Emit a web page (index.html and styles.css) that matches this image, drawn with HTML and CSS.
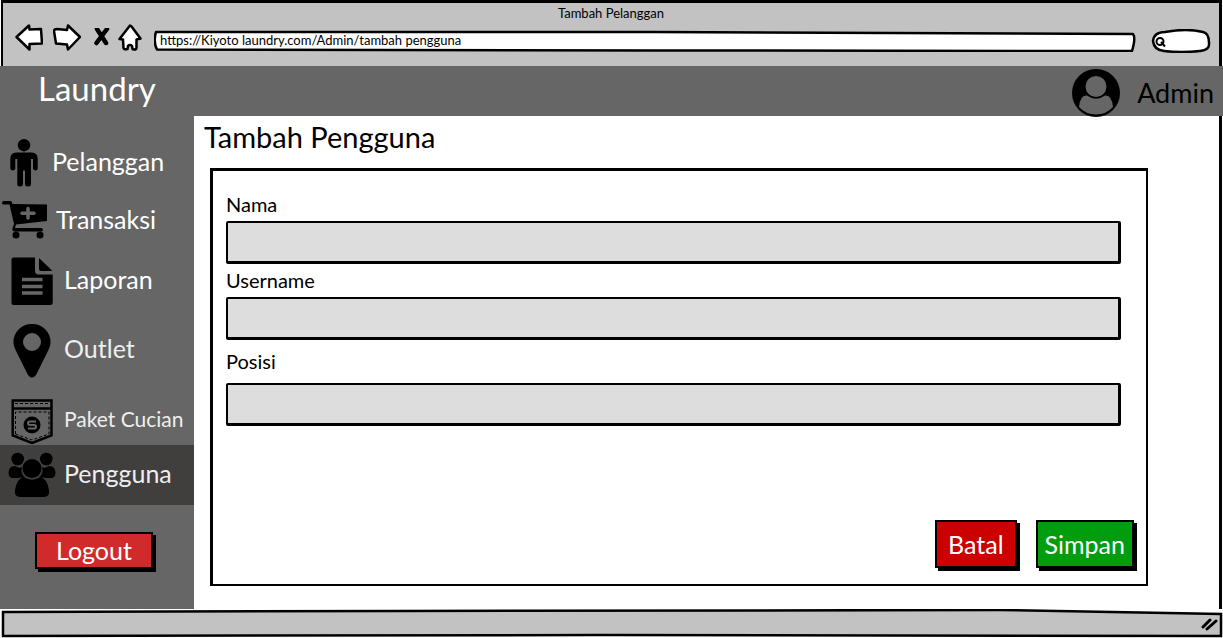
FILE: index.html
```html
<!DOCTYPE html>
<html lang="id">
<head>
<meta charset="utf-8">
<title>Tambah Pelanggan</title>
<link rel="stylesheet" href="styles.css">
</head>
<body>
<div class="window">
  <div class="chrome">
    <div class="chrome-title">Tambah Pelanggan</div>
    <div class="toolbar">
      <button class="tool" type="button" aria-label="Kembali">
        <svg width="28" height="28" viewBox="0 0 28 28"><path class="outline" d="M1.500 13 14 1.500 14.500 5.500 26 5 27 19.500 14.500 20 14.500 25.500Z"/></svg>
      </button>
      <button class="tool tool-forward" type="button" aria-label="Maju">
        <svg width="28" height="28" viewBox="0 0 28 28"><path class="outline" d="M1 7Q1 5 4 5L14 6 15 1.500 27 13 15 25.500 14 20.500 3 19.500Z"/></svg>
      </button>
      <button class="tool tool-stop" type="button" aria-label="Berhenti">
        <svg width="18" height="20" viewBox="0 0 18 20"><path d="M5 1 14 15M15 1 4.500 15" stroke="#000" stroke-width="4.500" stroke-linecap="round"/></svg>
      </button>
      <button class="tool tool-home" type="button" aria-label="Beranda">
        <svg width="24" height="28" viewBox="0 0 24 28"><path class="outline" d="M12 1.500 1.500 15 5 15.500 5.500 24Q6 26 9.500 25L10 22Q12 20 14 22L14.500 25Q18 26.500 18.500 24L18.500 15.500 22.500 14.500 13.500 2.500Z"/></svg>
      </button>
      <div class="address">
        <svg class="sketch" viewBox="0 0 982 22" preserveAspectRatio="none"><path class="outline" d="M2 2 500 2 979 4Q982 8 978 21L500 20.500 3 19.500Q-1 12 2 2Z"/></svg>
        <input class="address-input" type="text" aria-label="Alamat" value="https://Kiyoto laundry.com/Admin/tambah pengguna">
      </div>
      <div class="search">
        <svg class="sketch" viewBox="0 0 60 24" preserveAspectRatio="none"><path class="outline" d="M2 12Q3 3 14 3Q36-1 52 3Q58 4 58 14Q59 21 49 22Q30 24 13 22Q3 21 2 12Z"/><circle cx="9" cy="12.500" r="3.500" fill="none" stroke="#000" stroke-width="2"/><path d="M10 13 14 17.500" stroke="#000" stroke-width="2"/></svg>
        <input class="search-input" type="search" aria-label="Cari">
      </div>
    </div>
  </div>

  <header class="header">
    <div class="brand">Laundry</div>
    <div class="account">
      <svg width="48" height="48" viewBox="0 0 48 48"><circle cx="24" cy="24" r="24"/><circle cx="24" cy="17.500" r="10.500" fill="#666"/><path fill="#666" d="M15 26.500Q24 33 33 26.500Q40 26 41 38Q34 45.500 24 45.500T7 38Q8 26 15 26.500Z"/></svg>
      <span>Admin</span>
    </div>
  </header>

  <div class="body">
    <aside class="sidebar">
      <nav class="menu">
        <a class="item item-person" href="#">
          <svg width="48" height="48" viewBox="0 0 48 48"><circle cx="24" cy="6.200" r="6.200"/><path d="M16 13.500H32Q37.500 14 37.700 19.500V29.500Q37.500 31.500 35.500 31.500T33 29.500V20H31V45Q31 47.500 28 47.500T25 45V31.500H23V45Q23 47.500 20 47.500T17.300 45V20H15.300V29.500Q15 31.500 12.800 31.500T10.300 29.500V19.500Q10.500 14 16 13.500Z"/></svg>
          <span>Pelanggan</span>
        </a>
        <a class="item item-cart" href="#">
          <svg width="48" height="40" viewBox="0 0 48 40"><path d="M2 2Q2 0 4 0H10.500Q12 0 12.500 3L47 3.500V20L16 23.500 15 27H41Q43 27 43 28.700T41 30.500H14Q12 30 12.500 27L14 23 9.500 3.500H4Q2 3.500 2 2Z"/><circle cx="16" cy="34" r="3.500"/><circle cx="40" cy="34" r="3.500"/><path d="M28 7.500V17M22 12.200H34" stroke="#666" stroke-width="3.500" stroke-linecap="round"/></svg>
          <span>Transaksi</span>
        </a>
        <a class="item item-report" href="#">
          <svg width="48" height="48" viewBox="0 0 48 48"><path d="M5.500 0.500H27V14Q27 17 30 17.500H44.700V46Q44.500 48 42.500 48H5.500Q3.500 48 3.500 46V2.500Q3.500 0.500 5.500 .5Z"/><path d="M31 1 44.500 14H33Q31 14 31 12Z"/><path d="M14 22.500H34.500M14 29.500H34.500M14 36H34.500" stroke="#666" stroke-width="3.500"/></svg>
          <span>Laporan</span>
        </a>
        <a class="item item-outlet" href="#">
          <svg width="48" height="56" viewBox="0 0 48 56"><path fill-rule="evenodd" d="M24 2A18 18 0 0 0 5.500 20.500Q5.500 24 7.500 28L20 53Q24 58.500 28 53L40.500 28Q42.500 24 42.500 20.500A18 18 0 0 0 24 2ZM24 11A9 9 0 1 1 24 29A9 9 0 1 1 24 11Z"/></svg>
          <span>Outlet</span>
        </a>
        <a class="item item-package" href="#">
          <svg width="48" height="46" viewBox="0 0 48 46"><path d="M4.700 2.500H43.500V37.500L24 45 4.700 37.500Z" fill="none" stroke="#000" stroke-width="2.500"/><path d="M4 10.500H44" stroke="#000" stroke-width="2.500"/><path d="M7 5.500H41.500M7.500 36V14H41V36L24 42Z" fill="none" stroke="#000" stroke-dasharray="3 2"/><circle cx="24" cy="27" r="8.500"/><path d="M28 23.500H22Q20 23.500 20 25.200T22 27H26Q28 27 28 28.800T26 30.500H20" fill="none" stroke="#666" stroke-width="2"/></svg>
          <span>Paket Cucian</span>
        </a>
        <a class="item item-users" href="#" aria-current="page">
          <svg width="48" height="46" viewBox="0 0 48 46"><circle cx="9.700" cy="7" r="6.300"/><circle cx="38.300" cy="7" r="6.300"/><path d="M7 14Q12 17 14 15 12 21 17 26 12 25 10 26H4Q0 25 .6 20 1 14 7 14ZM41 14Q36 17 34 15 36 21 31 26 36 25 38 26H44Q48 25 47.400 20 47 14 41 14Z"/><circle cx="24" cy="16.500" r="9.500"/><path d="M16 25Q24 30.500 32 25Q39 26 41 38Q42 45 36 45H12Q6 45 7 38Q9 26 16 25Z"/></svg>
          <span>Pengguna</span>
        </a>
      </nav>
      <button class="btn btn-logout" type="button">Logout</button>
    </aside>

    <main class="content">
      <h1 class="heading">Tambah Pengguna</h1>
      <form class="panel">
        <div class="field">
          <label for="nama">Nama</label>
          <input id="nama" type="text">
        </div>
        <div class="field">
          <label for="username">Username</label>
          <input id="username" type="text">
        </div>
        <div class="field field-posisi">
          <label for="posisi">Posisi</label>
          <input id="posisi" type="text">
        </div>
        <div class="actions">
          <button class="btn btn-cancel" type="button">Batal</button>
          <button class="btn btn-save" type="submit">Simpan</button>
        </div>
      </form>
    </main>
  </div>

  <footer class="statusbar">
    <svg class="sketch" viewBox="0 0 1223 29" preserveAspectRatio="none"><path fill="#c2c2c2" stroke="#000" stroke-width="2.500" d="M3 3 400 2 1000 1 1221 5V27L600 26 3 27Z"/></svg>
    <svg class="grip" width="18" height="14" viewBox="0 0 18 14"><path d="M3 10 10 3M7 12 16 4" stroke="#000" stroke-width="3" stroke-linecap="round"/></svg>
  </footer>
</div>
</body>
</html>
```

FILE: styles.css
```css
* {
  box-sizing: border-box;
}

body {
  margin: 0;
  background: #fff;
  color: #000;
  font-family: Lato, "Open Sans", sans-serif;
}

button,
input {
  font: inherit;
}

.window {
  display: flex;
  flex-direction: column;
  min-height: 100vh;
}

.outline {
  fill: #fff;
  stroke: #000;
  stroke-width: 2.5;
  stroke-linejoin: round;
}

.sketch {
  position: absolute;
  inset: 0;
  width: 100%;
  height: 100%;
}

/* Browser chrome */
.chrome {
  height: 66px;
  margin: 0 1px;
  border: solid #000;
  border-width: 3px 3px 0 2px;
  background: #c2c2c2;
}

.chrome-title {
  font-size: 13px;
  line-height: 20px;
  text-align: center;
}

.toolbar {
  display: flex;
  align-items: center;
  height: 30px;
  padding: 0 8px 0 12px;
}

.tool {
  display: flex;
  padding: 0;
  border: 0;
  background: none;
}

.tool-forward {
  margin-left: 10px;
}

.tool-stop {
  margin-left: 11px;
}

.tool-home {
  margin-left: 8px;
}

.address {
  position: relative;
  flex: 1;
  height: 22px;
  margin: 6px 15px 0 12px;
}

.address-input,
.search-input {
  position: relative;
  display: block;
  width: 100%;
  height: 100%;
  padding: 0 6px 2px;
  border: 0;
  background: none;
  font-size: 13px;
  outline: none;
}

.search {
  position: relative;
  width: 60px;
  height: 24px;
  margin-top: 6px;
}

.search-input {
  padding-left: 18px;
}

/* Application header */
.header {
  display: flex;
  align-items: center;
  justify-content: space-between;
  height: 50px;
  padding: 0 9px 0 38px;
  background: #666;
}

.brand {
  padding-bottom: 6px;
  color: #fff;
  font-size: 33px;
  line-height: 40px;
}

.account {
  display: flex;
  align-items: center;
  gap: 17px;
  padding-top: 3px;
  font-size: 27px;
}

/* Sidebar */
.body {
  display: flex;
  flex: 1;
  margin-right: 1px;
  border-right: 3px solid #000;
}

.sidebar {
  width: 194px;
  background: #666;
}

.menu {
  padding-top: 18px;
}

.item {
  display: flex;
  align-items: center;
  gap: 8px;
  height: 58px;
  padding-left: 8px;
  color: #fff;
  font-size: 25px;
  text-decoration: none;
}

.item span {
  padding-bottom: 4px;
}

.item-person {
  gap: 4px;
  padding-left: 0;
}

.item-cart {
  padding-left: 0;
}

.item-report {
  height: 62px;
}

.item-outlet {
  height: 76px;
  color: #eee;
}

.item-package {
  height: 57px;
  padding-top: 8px;
  color: #eee;
  font-size: 21px;
}

.item-users {
  height: 60px;
  background: #403f3d;
  color: #eee;
}

/* Buttons */
.btn {
  border: 2px solid #000;
  box-shadow: 3px 3px 0 #000;
  color: #fff;
  font-size: 25px;
}

.btn-logout {
  display: block;
  width: 118px;
  height: 37px;
  margin: 27px 0 0 35px;
  padding: 0 0 2px;
  background: #d12a2a;
}

.btn-cancel {
  padding: 0 11px;
  background: #c00;
}

.btn-save {
  padding: 0 7px;
  background: #009d0e;
}

/* Form */
.content {
  display: flex;
  flex: 1;
  flex-direction: column;
  padding: 0 71px 23px 16px;
}

.heading {
  margin: 0 0 11px -6px;
  font-size: 29px;
  font-weight: 400;
  line-height: 41px;
}

.panel {
  display: flex;
  flex: 1;
  flex-direction: column;
  padding: 22px 25px 14px 13px;
  border: solid #000;
  border-width: 3px 2px 2px 3px;
}

.field {
  margin-bottom: 5px;
}

.field label {
  display: block;
  margin-bottom: 5px;
  font-size: 20px;
  line-height: 23px;
}

.field input {
  display: block;
  width: 100%;
  height: 43px;
  padding: 0 10px;
  border: solid #000;
  border-width: 2px 3px 3px 2px;
  border-radius: 2px;
  background: #ddd;
}

.field-posisi {
  padding-top: 5px;
}

.field-posisi label {
  margin-bottom: 10px;
}

.actions {
  display: flex;
  gap: 19px;
  justify-content: flex-end;
  height: 48px;
  margin: auto -13px 2px 0;
}

/* Status bar */
.statusbar {
  position: relative;
  display: flex;
  align-items: center;
  justify-content: flex-end;
  height: 29px;
  padding-right: 5px;
}

.grip {
  position: relative;
}
```
